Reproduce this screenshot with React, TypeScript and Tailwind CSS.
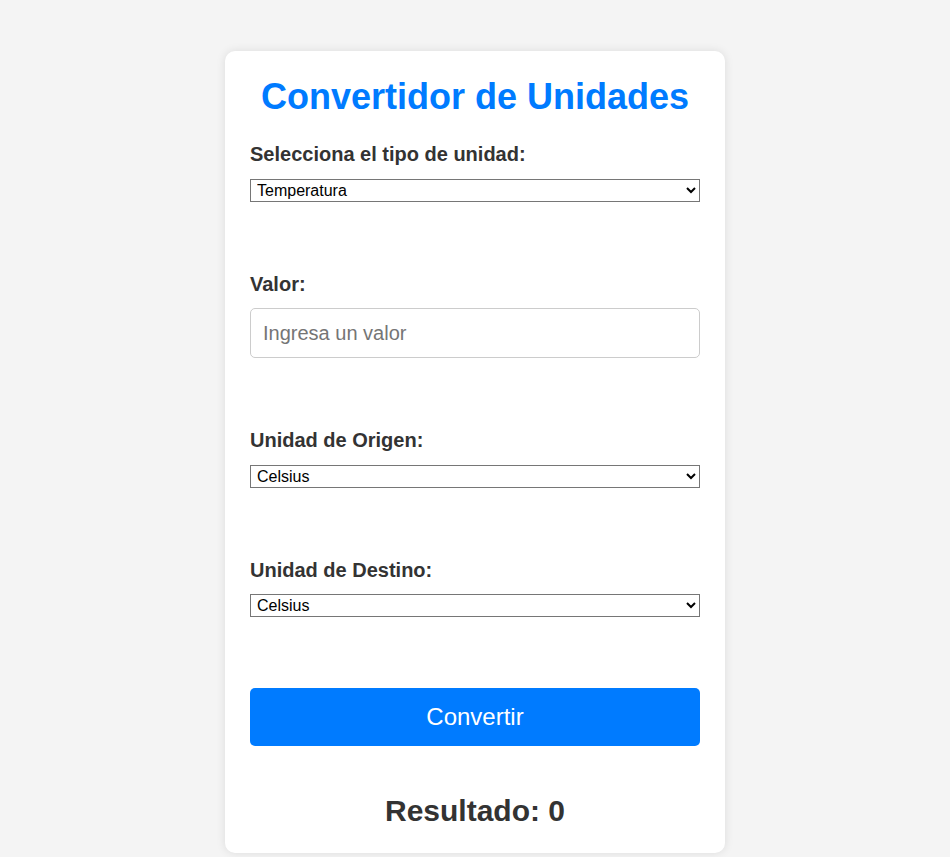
import { useState } from 'react';

const units: Record<string, string[]> = {
  temperatura: ['Celsius', 'Fahrenheit', 'Kelvin'],
  longitud: ['Metros', 'Kilómetros', 'Millas', 'Pies'],
  peso: ['Kilogramos', 'Gramos', 'Libras', 'Onzas'],
};

const labelClass = 'block text-[20px] leading-[23px] font-bold text-[#333]';
const selectClass =
  'block w-full h-[23px] border border-[#767676] bg-white text-[16px] leading-[18px] text-black px-[2px] outline-none';

function App() {
  const [type, setType] = useState('temperatura');
  const [value, setValue] = useState('');
  const [from, setFrom] = useState('Celsius');
  const [to, setTo] = useState('Celsius');

  const list = units[type];

  return (
    <div className="min-h-screen bg-[#f4f4f4] pt-[51px] font-['Liberation_Sans',Arial,sans-serif]">
      <div className="mx-auto w-[500px] rounded-[10px] bg-white p-[25px] shadow-[0_0_10px_rgba(0,0,0,0.1)]">
        <h1 className="text-center text-[36px] leading-[41px] font-bold text-[#007bff]">
          Convertidor de Unidades
        </h1>

        <label className={`${labelClass} mt-[26px]`}>Selecciona el tipo de unidad:</label>
        <select
          className={`${selectClass} mt-[13px]`}
          value={type}
          onChange={(e) => {
            setType(e.target.value);
            setFrom(units[e.target.value][0]);
            setTo(units[e.target.value][0]);
          }}
        >
          <option value="temperatura">Temperatura</option>
          <option value="longitud">Longitud</option>
          <option value="peso">Peso</option>
        </select>

        <label className={`${labelClass} mt-[71px]`}>Valor:</label>
        <input
          type="number"
          placeholder="Ingresa un valor"
          value={value}
          onChange={(e) => setValue(e.target.value)}
          className="mt-[12px] block h-[50px] w-full rounded-[5px] border border-[#ccc] px-[12px] text-[20px] text-[#333] placeholder:text-[#757575] outline-none"
        />

        <label className={`${labelClass} mt-[71px]`}>Unidad de Origen:</label>
        <select className={`${selectClass} mt-[13px]`} value={from} onChange={(e) => setFrom(e.target.value)}>
          {list.map((u) => (
            <option key={u}>{u}</option>
          ))}
        </select>

        <label className={`${labelClass} mt-[71px]`}>Unidad de Destino:</label>
        <select className={`${selectClass} mt-[12px]`} value={to} onChange={(e) => setTo(e.target.value)}>
          {list.map((u) => (
            <option key={u}>{u}</option>
          ))}
        </select>

        <button
          type="button"
          className="mt-[71px] block h-[58px] w-full rounded-[5px] bg-[#007bff] text-[24px] text-white"
        >
          Convertir
        </button>

        <h2 className="mt-[48px] text-center text-[30px] leading-[34px] font-bold text-[#333]">Resultado: 0</h2>
      </div>
    </div>
  );
}

export default App;
